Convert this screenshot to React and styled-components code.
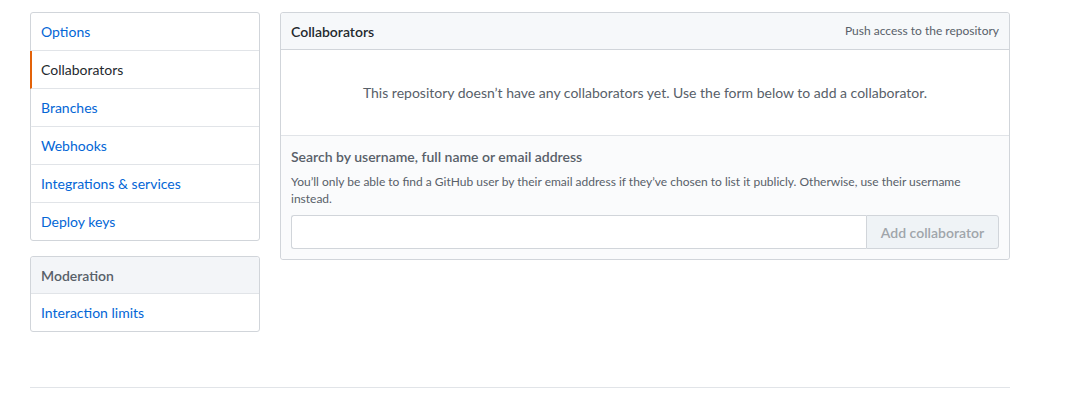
import React from "react";
import styled, { createGlobalStyle } from "styled-components";

const Global = createGlobalStyle`
  html, body { margin: 0; padding: 0; background: #fff; }
  body {
    font-family: "Segoe UI", Lato, "Noto Sans", sans-serif;
    font-size: 14px;
    line-height: 1.5;
    color: #24292e;
  }
  * { box-sizing: border-box; }
`;

const Page = styled.div`
  width: 980px;
  margin-left: 30px;
  padding-top: 12px;
`;

const Layout = styled.div`
  display: flex;
  gap: 20px;
  align-items: flex-start;
`;

const Sidebar = styled.div`
  width: 230px;
  display: flex;
  flex-direction: column;
  gap: 15px;
`;

const Menu = styled.nav`
  border: 1px solid #d1d5da;
  border-radius: 3px;
  background: #fff;
  display: flex;
  flex-direction: column;
`;

const MenuHeading = styled.div`
  height: 37px;
  padding: 0 10px;
  display: flex;
  align-items: center;
  font-weight: 600;
  color: #586069;
  background: #f3f5f8;
  border-bottom: 1px solid #e1e4e8;
  border-radius: 3px 3px 0 0;
`;

const MenuItem = styled.a`
  height: 38px;
  display: flex;
  align-items: center;
  text-decoration: none;
  color: ${(p) => (p.$selected ? "#24292e" : "#0366d6")};
  border-bottom: 1px solid #e1e4e8;
  border-left: 2px solid ${(p) => (p.$selected ? "#e36209" : "transparent")};
  margin-left: -1px;
  padding: 0 10px 0 9px;
  &:last-child { border-bottom: 0; height: 37px; }
`;

const Main = styled.div`
  width: 730px;
  border: 1px solid #d1d5da;
  border-radius: 3px;
  background: #fff;
`;

const MainHeader = styled.div`
  height: 37px;
  padding: 0 10px;
  display: flex;
  align-items: center;
  justify-content: space-between;
  background: #f6f8fa;
  border-bottom: 1px solid #d1d5da;
  border-radius: 3px 3px 0 0;
`;

const Title = styled.h3`
  margin: 0;
  font-size: 14px;
  font-weight: 600;
  color: #24292e;
`;

const Meta = styled.span`
  font-size: 12px;
  color: #586069;
`;

const Blank = styled.div`
  height: 86px;
  display: flex;
  align-items: center;
  justify-content: center;
  color: #586069;
  border-bottom: 1px solid #e1e4e8;
`;

const Form = styled.div`
  background: #fafbfc;
  padding: 10px;
  border-radius: 0 0 3px 3px;
`;

const Label = styled.label`
  display: block;
  font-weight: 600;
  color: #586069;
  line-height: 22px;
`;

const Note = styled.p`
  margin: 5px 0 8px;
  font-size: 12px;
  line-height: 17px;
  color: #586069;
`;

const InputGroup = styled.div`
  display: flex;
`;

const Input = styled.input`
  flex: 1;
  height: 34px;
  border: 1px solid #d1d5da;
  border-right: 0;
  border-radius: 3px 0 0 3px;
  background: #fff;
  font: inherit;
  padding: 0 8px;
  outline: none;
`;

const Button = styled.button`
  width: 133px;
  height: 34px;
  border: 1px solid #d1d5da;
  border-radius: 0 3px 3px 0;
  background: #eff3f6;
  color: #a0a5aa;
  font: inherit;
  font-weight: 600;
  padding: 0;
`;

const Rule = styled.hr`
  margin: 55px 0 0;
  border: 0;
  border-top: 1px solid #e1e4e8;
`;

export default function App() {
  const items = ["Options", "Collaborators", "Branches", "Webhooks", "Integrations & services", "Deploy keys"];
  return (
    <Page>
      <Global />
      <Layout>
        <Sidebar>
          <Menu>
            {items.map((t) => (
              <MenuItem key={t} href="#" $selected={t === "Collaborators"}>{t}</MenuItem>
            ))}
          </Menu>
          <Menu>
            <MenuHeading>Moderation</MenuHeading>
            <MenuItem href="#">Interaction limits</MenuItem>
          </Menu>
        </Sidebar>
        <Main>
          <MainHeader>
            <Title>Collaborators</Title>
            <Meta>Push access to the repository</Meta>
          </MainHeader>
          <Blank>This repository doesn’t have any collaborators yet. Use the form below to add a collaborator.</Blank>
          <Form>
            <Label>Search by username, full name or email address</Label>
            <Note>You’ll only be able to find a GitHub user by their email address if they’ve chosen to list it publicly. Otherwise, use their username instead.</Note>
            <InputGroup>
              <Input type="text" />
              <Button>Add collaborator</Button>
            </InputGroup>
          </Form>
        </Main>
      </Layout>
      <Rule />
    </Page>
  );
}
